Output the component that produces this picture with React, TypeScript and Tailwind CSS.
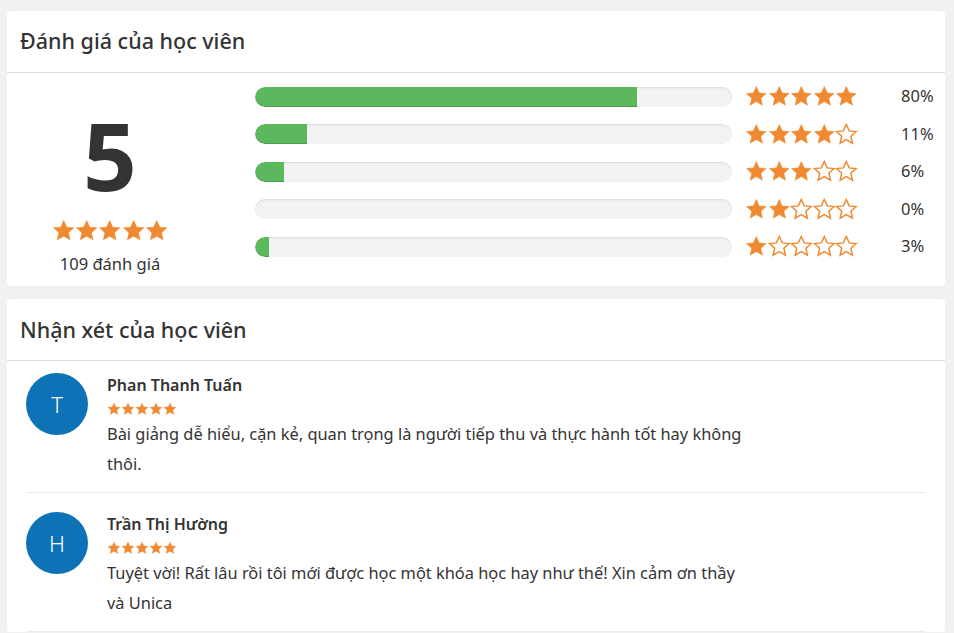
import React from 'react';

const ORANGE = '#ef8a32';

function Star({ size, filled }: { size: number; filled: boolean }) {
  return (
    <svg width={size} height={size} viewBox="0 0 24 24" className="shrink-0">
      <polygon
        points="12,1.6 15.1,8.4 22.4,9.1 16.9,14.1 18.5,21.4 12,17.6 5.5,21.4 7.1,14.1 1.6,9.1 8.9,8.4"
        fill={filled ? ORANGE : '#fff'}
        stroke={ORANGE}
        strokeWidth={filled ? 0.6 : 1.6}
        strokeLinejoin="miter"
      />
    </svg>
  );
}

function Stars({ count, size }: { count: number; size: number }) {
  return (
    <div className="flex items-center">
      {[0, 1, 2, 3, 4].map((i) => (
        <Star key={i} size={size} filled={i < count} />
      ))}
    </div>
  );
}

const breakdown = [
  { stars: 5, percent: 80 },
  { stars: 4, percent: 11 },
  { stars: 3, percent: 6 },
  { stars: 2, percent: 0 },
  { stars: 1, percent: 3 },
];

const reviews = [
  {
    initial: 'T',
    name: 'Phan Thanh Tuấn',
    text: 'Bài giảng dễ hiểu, cặn kẻ, quan trọng là người tiếp thu và thực hành tốt hay không thôi.',
  },
  {
    initial: 'H',
    name: 'Trần Thị Hường',
    text: 'Tuyệt vời! Rất lâu rồi tôi mới được học một khóa học hay như thế! Xin cảm ơn thầy và Unica',
  },
];

export default function App() {
  return (
    <div
      className="min-h-[633px] bg-[#f1f1f1] pl-[7px] pr-[9px] pt-[11px] text-[#333]"
      style={{ fontFamily: '"Noto Sans", "Open Sans", Arial, sans-serif' }}
    >
      {/* rating summary */}
      <div className="bg-white rounded">
        <div className="h-[62px] flex items-center px-[13px] border-b border-[#dcdcdc]">
          <h2 className="text-[21.5px] font-medium text-[#333]">Đánh giá của học viên</h2>
        </div>
        <div className="flex items-start pt-[5px] pb-[12px]">
          <div className="w-[206px] flex flex-col items-center pt-[30px]">
            <div className="text-[94px] leading-[94px] font-bold text-[#333]">5</div>
            <div className="mt-[17px]">
              <Stars count={5} size={23.4} />
            </div>
            <div className="mt-[12px] text-[16.5px] leading-[20px] text-[#333]">109 đánh giá</div>
          </div>
          <div className="flex-1 pl-[42px] flex flex-col">
            {breakdown.map((row) => (
              <div key={row.stars} className="h-[37.5px] flex items-center">
                <div className="w-[477px] h-[20px] rounded-full bg-[#f3f3f3] shadow-[inset_0_1px_2px_rgba(0,0,0,0.1)] overflow-hidden">
                  <div
                    className="h-full bg-[#5cb85c] rounded-l-full shadow-[inset_0_-1px_0_rgba(0,0,0,0.15)]"
                    style={{ width: `${row.percent}%` }}
                  />
                </div>
                <div className="ml-[13px] w-[156px]">
                  <Stars count={row.stars} size={22.6} />
                </div>
                <div className="text-[16.5px] text-[#333]">{row.percent}%</div>
              </div>
            ))}
          </div>
        </div>
      </div>

      {/* reviews */}
      <div className="bg-white rounded mt-[13px]">
        <div className="h-[62px] flex items-center px-[13px] border-b border-[#dcdcdc]">
          <h2 className="text-[21.5px] font-medium text-[#333]">Nhận xét của học viên</h2>
        </div>
        <div className="px-[19px] pt-[12px]">
          {reviews.map((r, i) => (
            <div
              key={r.name}
              className={`flex border-b border-[#ececec] pb-[13px] ${i > 0 ? 'pt-[19px]' : ''}`}
            >
              <div className="w-[62px] h-[62px] rounded-full bg-[#0e73b6] text-white flex items-center justify-center text-[22px] font-light shrink-0">
                {r.initial}
              </div>
              <div className="ml-[19px] w-[640px]">
                <div className="text-[16px] font-semibold leading-[24px] text-[#333]">{r.name}</div>
                <div className="mt-[5px]">
                  <Stars count={5} size={14} />
                </div>
                <p className="text-[16.4px] leading-[30px] text-[#333] mt-[3px]">{r.text}</p>
              </div>
            </div>
          ))}
        </div>
      </div>
    </div>
  );
}
